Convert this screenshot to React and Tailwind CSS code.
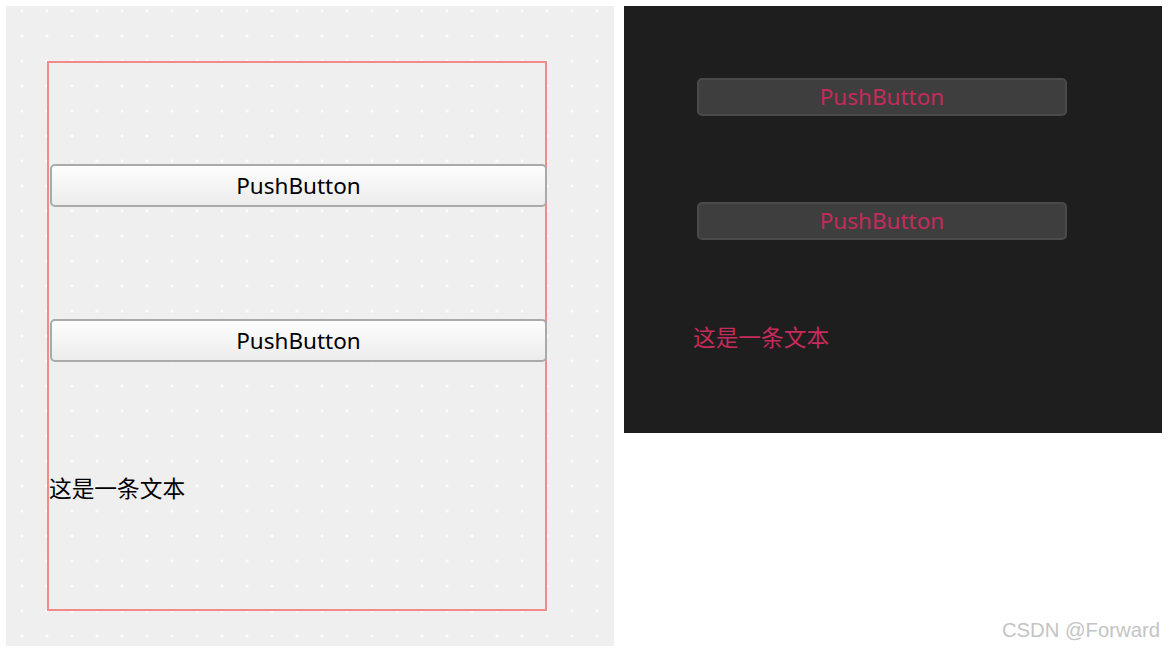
import React from 'react'

const ui = { fontFamily: '"Noto Sans", "Noto Sans CJK SC", sans-serif' }
const cjk = { fontFamily: '"Noto Sans CJK SC", "Noto Sans", sans-serif' }

function LightButton() {
    return (
        <button
            type="button"
            style={ui}
            className="ml-px w-[497px] h-[43px] rounded-[5px] border-2 border-[#aaaaaa] bg-gradient-to-b from-[#fdfdfd] to-[#ececec] text-[22.5px] leading-none text-black flex items-center justify-center pt-px"
        >
            PushButton
        </button>
    )
}

function DarkButton() {
    return (
        <button
            type="button"
            style={ui}
            className="w-[370px] h-[38px] rounded-[5px] border-2 border-[#4a4a4a] bg-[#3e3e3e] text-[22.5px] leading-none text-[#c52b5b] flex items-center justify-center"
        >
            PushButton
        </button>
    )
}

export default function App() {
    return (
        <div className="w-[1171px] h-[649px] bg-white flex pt-[6px] pl-[6px] gap-[10px] overflow-hidden">
            {/* 디자이너 화면 (점 격자) */}
            <div className="w-[608px] h-[640px] bg-[#efefef] bg-[radial-gradient(circle,#ffffff_1.1px,transparent_1.6px)] bg-size-[25px_25px] bg-position-[3.5px_-7.5px] pl-[41px] pt-[55px]">
                <div className="w-[500px] h-[550px] border-2 border-[#f28a8a] flex flex-col">
                    <div className="mt-[101px]">
                        <LightButton />
                    </div>
                    <div className="mt-[112px]">
                        <LightButton />
                    </div>
                    <div style={cjk} className="mt-[110px] text-[22.7px] leading-[32px] text-black">
                        这是一条文本
                    </div>
                </div>
            </div>

            {/* 실행 화면 + 워터마크 */}
            <div className="flex flex-col w-[538px]">
                <div className="h-[427px] bg-[#1e1e1e] flex flex-col pl-[73px] pt-[72px]">
                    <DarkButton />
                    <div className="mt-[86px]">
                        <DarkButton />
                    </div>
                    <div style={cjk} className="-ml-[4px] mt-[81px] text-[22.7px] leading-[32px] text-[#c52b5b]">
                        这是一条文本
                    </div>
                </div>
                <div className="flex-1 flex items-end justify-end pb-[9px] pr-[2px]">
                    <span
                        style={{ fontFamily: '"Liberation Sans", Arial, sans-serif' }}
                        className="text-[20.3px] leading-none text-[#c4c4c4]"
                    >
                        CSDN @Forward
                    </span>
                </div>
            </div>
        </div>
    )
}
